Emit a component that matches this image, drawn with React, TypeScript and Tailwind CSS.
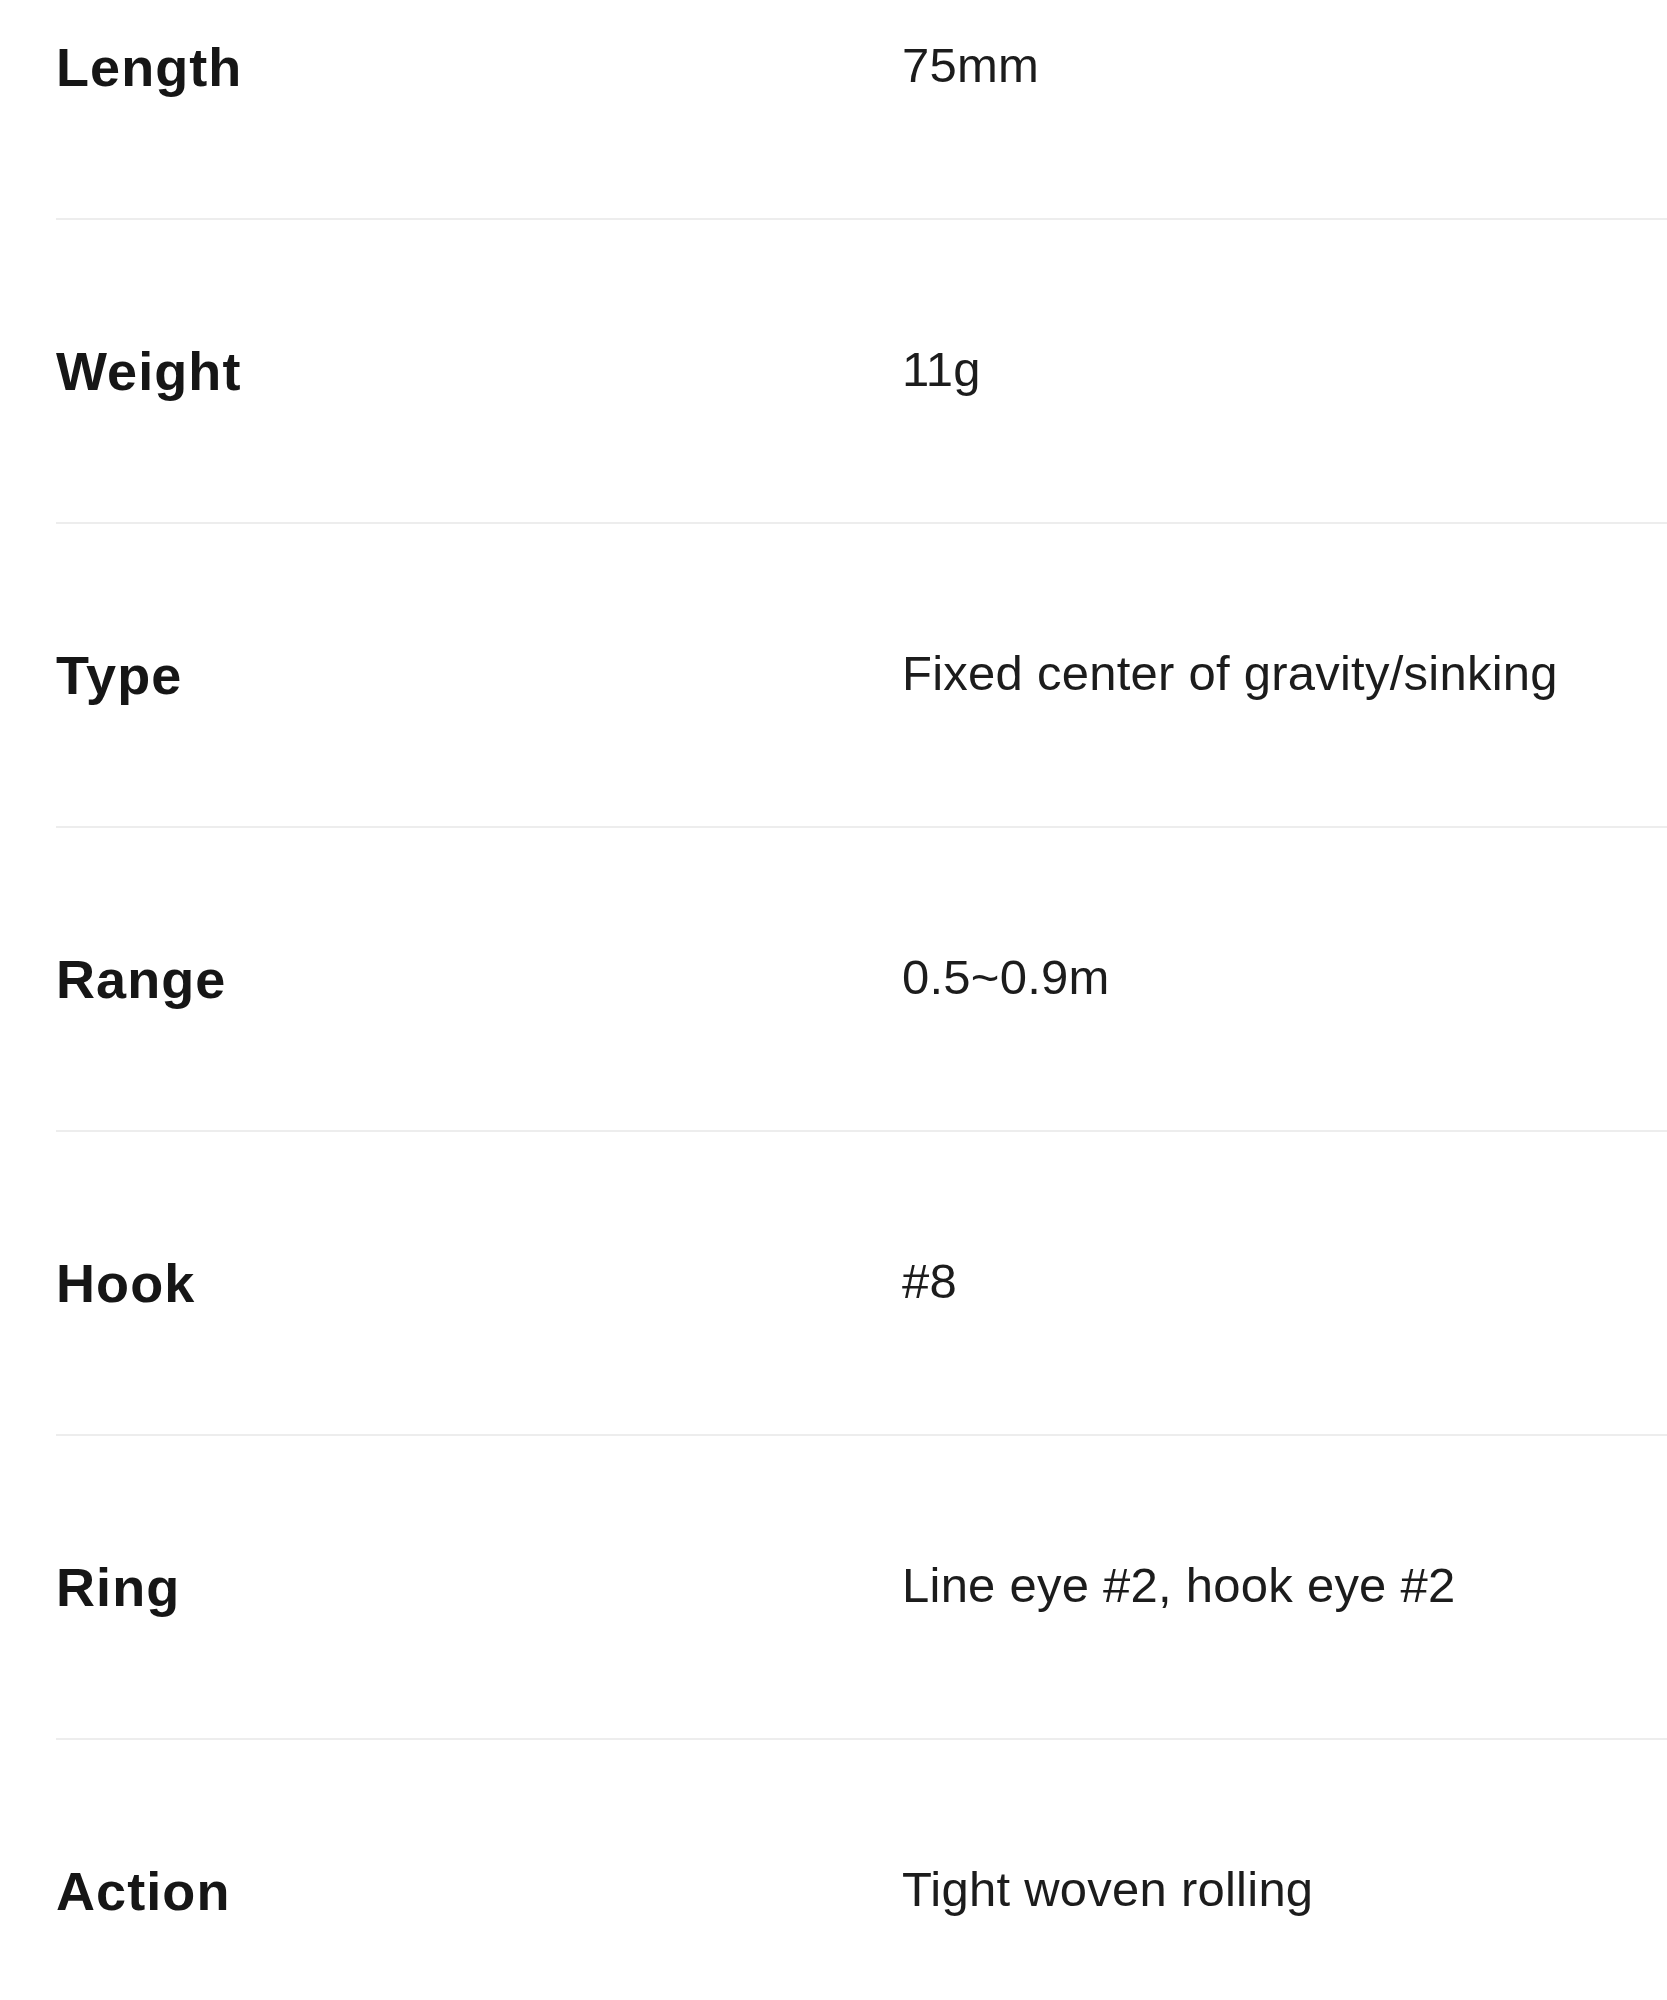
const specs = [
  { name: "Length", value: "75mm" },
  { name: "Weight", value: "11g" },
  { name: "Type", value: "Fixed center of gravity/sinking" },
  { name: "Range", value: "0.5~0.9m" },
  { name: "Hook", value: "#8" },
  { name: "Ring", value: "Line eye #2, hook eye #2" },
  { name: "Action", value: "Tight woven rolling" },
];

export default function App() {
  return (
    <div className="h-[2000px] overflow-hidden bg-white font-['Liberation_Sans',Arial,sans-serif] text-[#161616]">
      <div className="-mt-[84px] pl-[56px]">
        {specs.map((spec) => (
          <div
            key={spec.name}
            className="grid h-[304px] grid-cols-[846px_1fr] items-center border-b-2 border-[#ededed]"
          >
            <div className="text-[54px] font-bold leading-none tracking-[0.02em]">{spec.name}</div>
            <div className="mb-1 text-[49px] leading-none tracking-[0.005em] text-[#1c1c1c]">{spec.value}</div>
          </div>
        ))}
      </div>
    </div>
  );
}
